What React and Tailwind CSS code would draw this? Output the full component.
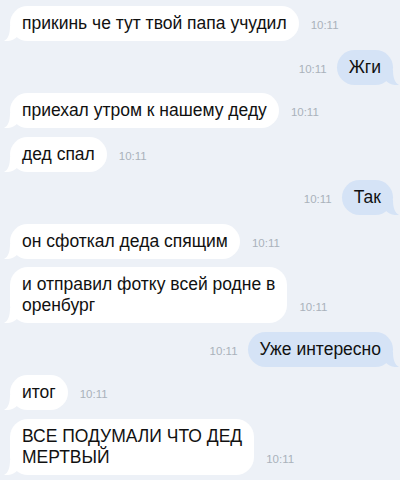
const messages = [
  { out: false, lines: ["прикинь че тут твой папа учудил"] },
  { out: true, lines: ["Жги"] },
  { out: false, lines: ["приехал утром к нашему деду"] },
  { out: false, lines: ["дед спал"] },
  { out: true, lines: ["Так"] },
  { out: false, lines: ["он сфоткал деда спящим"] },
  { out: false, lines: ["и отправил фотку всей родне в", "оренбург"] },
  { out: true, lines: ["Уже интересно"] },
  { out: false, lines: ["итог"] },
  { out: false, lines: ["ВСЕ ПОДУМАЛИ ЧТО ДЕД", "МЕРТВЫЙ"] },
];

function Tail({ out }) {
  // small curl at the bottom corner of the bubble
  if (out) {
    return (
      <svg
        className="absolute -right-[6px] bottom-0"
        width="16"
        height="16"
        viewBox="0 0 16 16"
      >
        <path d="M10 1 C10 9 12 14 16 16 C10 16.5 6 15 2 11 L2 1 Z" fill="#d5e3f6" />
      </svg>
    );
  }
  return (
    <svg
      className="absolute -left-[6px] bottom-0"
      width="16"
      height="16"
      viewBox="0 0 16 16"
    >
      <path d="M6 1 C6 9 4 14 0 16 C6 16.5 10 15 14 11 L14 1 Z" fill="#ffffff" />
    </svg>
  );
}

function Message({ out, lines }) {
  const time = (
    <span className="text-[11.5px] text-[#aab1bb] pb-[9px] leading-[13px]">10:11</span>
  );
  return (
    <div className={`flex items-end ${out ? "justify-end gap-[10px]" : "gap-[12px]"}`}>
      {out && time}
      <div
        className={`relative rounded-[18px] px-[12px] py-[7px] text-[17.5px] leading-[21px] text-[#111111] whitespace-nowrap ${
          out ? "bg-[#d5e3f6]" : "bg-white"
        }`}
      >
        <Tail out={out} />
        <span className="relative">
          {lines.map((l, i) => (
            <span key={i} className="block">
              {l}
            </span>
          ))}
        </span>
      </div>
      {!out && time}
    </div>
  );
}

export default function App() {
  return (
    <div
      className="w-[400px] h-[480px] overflow-hidden bg-[#edf1f7] flex flex-col gap-[8.5px] pt-[6px] pl-[10px] pr-[7px]"
      style={{ fontFamily: '"Liberation Sans", Arial, sans-serif' }}
    >
      {messages.map((m, i) => (
        <Message key={i} {...m} />
      ))}
    </div>
  );
}
